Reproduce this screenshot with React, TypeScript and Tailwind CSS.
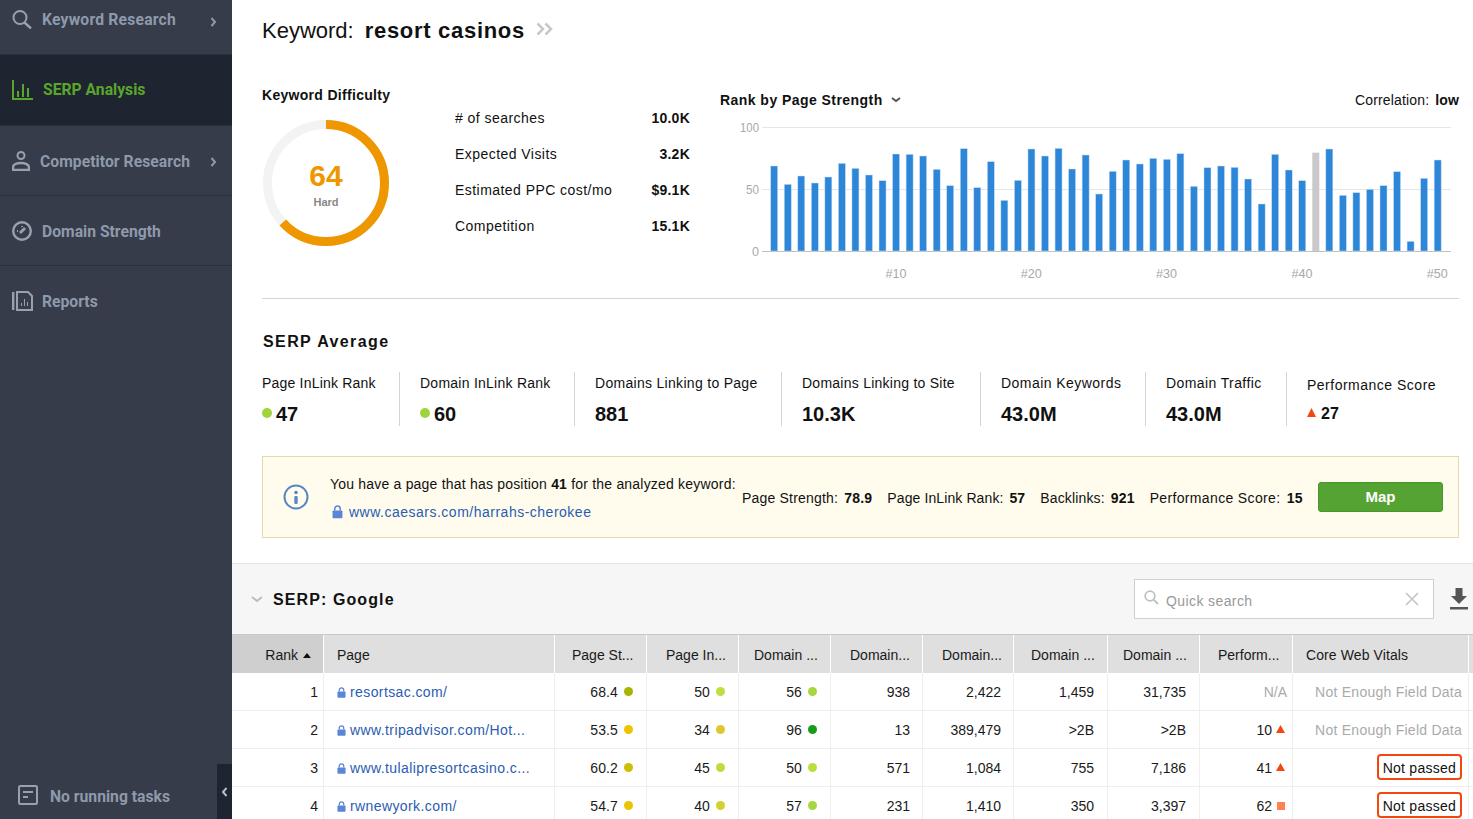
import type { ReactNode } from 'react';

const barTops = [258,313,288,309,291,250,265,285,302,222,223,228,268,317,206,323,245,361,301,207,228,205,267,225,342,274,240,252,235,238,221,319,263,258,262,297,372,223,270,302,218,207,346,338,328,317,275,484,295,240];

const gridCols = 'grid-cols-[92px_231px_92px_92px_92px_92px_91px_94px_92px_93px_176px_4px]';

type Dot = { value: string; color: string };
interface Row {
  rank: number;
  page: string;
  strength: Dot;
  inlink: Dot;
  domain: Dot;
  d1: string;
  d2: string;
  d3: string;
  d4: string;
  perf: ReactNode;
  vitals: boolean;
}

const rows: Row[] = [
  { rank: 1, page: 'resortsac.com/', strength: { value: '68.4', color: 'bg-[#a8b400]' }, inlink: { value: '50', color: 'bg-[#bde040]' }, domain: { value: '56', color: 'bg-[#a5d83f]' }, d1: '938', d2: '2,422', d3: '1,459', d4: '31,735', perf: <span className="text-[#aaaaaa] mr-[-2px]">N/A</span>, vitals: false },
  { rank: 2, page: 'www.tripadvisor.com/Hot...', strength: { value: '53.5', color: 'bg-[#eec400]' }, inlink: { value: '34', color: 'bg-[#dfc82c]' }, domain: { value: '96', color: 'bg-[#1a9a1a]' }, d1: '13', d2: '389,479', d3: '>2B', d4: '>2B', perf: <>10<Triangle /></>, vitals: false },
  { rank: 3, page: 'www.tulalipresortcasino.c...', strength: { value: '60.2', color: 'bg-[#cdbf00]' }, inlink: { value: '45', color: 'bg-[#c0dc3c]' }, domain: { value: '50', color: 'bg-[#bcdd40]' }, d1: '571', d2: '1,084', d3: '755', d4: '7,186', perf: <>41<Triangle /></>, vitals: true },
  { rank: 4, page: 'rwnewyork.com/', strength: { value: '54.7', color: 'bg-[#eac400]' }, inlink: { value: '40', color: 'bg-[#d4d030]' }, domain: { value: '57', color: 'bg-[#a5d83f]' }, d1: '231', d2: '1,410', d3: '350', d4: '3,397', perf: <>62<span className="ml-[5px] w-[8px] h-[8px] bg-[#ff8050] inline-block mb-[1px]" /></>, vitals: true },
];

function Triangle() {
  return (
    <svg width="9" height="8" viewBox="0 0 9 8" className="ml-[4px] mb-[3px] inline-block">
      <path d="M4.5 0 9 8H0z" fill="#f4460f" />
    </svg>
  );
}

function Lock({ size = 10 }: { size?: number }) {
  return (
    <svg width={size} height={size * 1.2} viewBox="0 0 10 12" className="shrink-0">
      <path d="M2.5 5V3.4a2.5 2.5 0 0 1 5 0V5" fill="none" stroke="#5b86d6" strokeWidth="1.4" />
      <rect x="0.5" y="5" width="9" height="7" rx="0.8" fill="#5b86d6" />
    </svg>
  );
}

function NavItem({ icon, label, arrow, active, h, labelClass = '' }: { icon: ReactNode; label: string; arrow?: boolean; active?: boolean; h: string; labelClass?: string }) {
  return (
    <div className={`${h} flex items-center pl-[12px] pr-[15px] border-b border-[#2b303b] ${active ? 'bg-[#1e2430] text-[#5aa62c]' : 'text-[#8e99ab]'}`}>
      <span className="w-[30px] shrink-0 flex">{icon}</span>
      <span className={`flex-1 text-[15.7px] font-bold whitespace-nowrap ${labelClass}`}>{label}</span>
      {arrow && (
        <svg width="7" height="10" viewBox="0 0 7 10" className="mt-[3px]">
          <path d="M1.5 1 5 5 1.5 9" fill="none" stroke="#8e99ab" strokeWidth="2" />
        </svg>
      )}
    </div>
  );
}

function Sidebar() {
  return (
    <aside className="relative w-[232px] shrink-0 bg-[#363c49] h-[819px] font-['Roboto',sans-serif]">
      <div className="h-[55px] flex items-start pt-[10px] pl-[12px] pr-[15px] border-b border-[#2b303b] text-[#8e99ab]">
        <svg width="20" height="19" viewBox="0 0 20 19" className="mr-[10px]">
          <circle cx="8" cy="7.5" r="6.500" fill="none" stroke="#9aa1ad" strokeWidth="2" />
          <path d="m12.500 12.500 6.500 6" stroke="#9aa1ad" strokeWidth="2.400" />
        </svg>
        <span className="flex-1 text-[15.7px] leading-[20px] font-bold tracking-[0.2px]">Keyword Research</span>
        <svg width="7" height="10" viewBox="0 0 7 10" className="mt-[7px]">
          <path d="M1.5 1 5 5 1.5 9" fill="none" stroke="#8e99ab" strokeWidth="2" />
        </svg>
      </div>
      <NavItem
        h="h-[71px]"
        active
        label="SERP Analysis"
        labelClass="ml-[1px]"
        icon={
          <svg width="21" height="20" viewBox="0 0 21 20" fill="none" stroke="#5aa62c" strokeWidth="2">
            <path d="M1 0v19h20M6 11v6M11 4v13M16 8v9" />
          </svg>
        }
        arrow={false}
      />
      <NavItem
        h="h-[70px]"
        arrow
        label="Competitor Research"
        labelClass="ml-[-2px] pt-[2px] tracking-[0.05px]"
        icon={
          <svg width="18" height="20" viewBox="0 0 18 20" fill="none" stroke="#9aa1ad" strokeWidth="2">
            <circle cx="9" cy="4.5" r="3.5" />
            <path d="M1 19v-2.500C1 13.500 5 12 9 12s8 1.500 8 4.500V19z" strokeWidth="2.400" />
          </svg>
        }
      />
      <NavItem
        h="h-[70px]"
        label="Domain Strength"
        labelClass="pt-[2px]"
        icon={
          <svg width="20" height="20" viewBox="0 0 20 20" fill="none" stroke="#9aa1ad" strokeWidth="2.400">
            <circle cx="10" cy="10" r="8.800" />
            <path d="m8 12 5-5" strokeWidth="2.800" />
            <path d="M5 10h1M10 5v1" strokeWidth="1.800" />
          </svg>
        }
      />
      <div className="h-[70px] flex items-center pl-[12px] text-[#8e99ab]">
        <span className="w-[30px] shrink-0 flex">
          <svg width="21" height="20" viewBox="0 0 21 20" fill="none" stroke="#9aa1ad" strokeWidth="1.800">
            <path d="M1.200 1v18" strokeWidth="2.400" />
            <path d="M5 1h11l4 4v14H5z" strokeWidth="2" />
            <path d="M9.500 15v-3M12.500 15V8M15.500 15v-4" strokeWidth="1" />
          </svg>
        </span>
        <span className="text-[15.7px] font-bold pt-[2px]">Reports</span>
      </div>
      <div className="absolute left-[18px] bottom-[10px] flex items-center text-[#8e99ab]">
        <svg width="20" height="20" viewBox="0 0 20 20" fill="none" stroke="#9aa1ad" strokeWidth="2" className="mr-[12px] mb-[2px]">
          <rect x="1" y="1" width="18" height="18" rx="1.500" />
          <path d="M5 7h10M5 12h5" />
        </svg>
        <span className="text-[15.7px] font-bold pt-[2px]">No running tasks</span>
      </div>
      <div className="absolute right-0 bottom-0 w-[15px] h-[55px] bg-[#1e2430] flex items-center justify-center">
        <svg width="7" height="10" viewBox="0 0 7 10">
          <path d="M5.500 1 2 5l3.500 4" fill="none" stroke="#b8bec8" strokeWidth="2" />
        </svg>
      </div>
    </aside>
  );
}

function Gauge() {
  return (
    <div className="relative w-[126px] h-[126px] ml-[1px]">
      <svg width="126" height="126" viewBox="0 0 126 126" className="-rotate-90">
        <circle cx="63" cy="63" r="58.500" fill="none" stroke="#f3f3f3" strokeWidth="9" />
        <circle cx="63" cy="63" r="58.500" fill="none" stroke="#ee9700" strokeWidth="9" strokeDasharray="232 368" />
      </svg>
      <div className="absolute inset-0 pt-[2px] flex flex-col items-center justify-center">
        <span className="text-[30px] leading-[34px] font-bold text-[#ee9700]">64</span>
        <span className="text-[11px] leading-[14px] font-bold text-[#888888] mt-[2px]">Hard</span>
      </div>
    </div>
  );
}

function Chart() {
  return (
    <svg width="739" height="170" viewBox="0 0 739 170" className="block mt-[9px]">
      <path d="M42 8.500h689M42 70.500h689" stroke="#e6e6e6" />
      <path d="M42 132.500h689" stroke="#c0c0c0" />
      {[['100', 19], ['50', 13], ['0', 7]].map(([t, len], i) => (
        <text key={t} x="39" y={13 + i * 62} textAnchor="end" fontSize="13" textLength={len} lengthAdjust="spacingAndGlyphs" fill="#a8a8a8">{t}</text>
      ))}
      {barTops.map((top, i) => {
        const h = (513 - top) / 3;
        const gray = i === 40;
        return <rect key={i} x={50.7 + i * 13.54} y={132 - h} width="7" height={h} fill={gray ? '#c9c9c9' : '#2e86d9'} stroke={gray ? 'none' : '#c5dff6'} strokeWidth="0.5" />;
      })}
      {[10, 20, 30, 40, 50].map((n, i) => (
        <text key={n} x={176 + i * 135.300} y="159" textAnchor="middle" fontSize="13" textLength={21} lengthAdjust="spacingAndGlyphs" fill="#a8a8a8">#{n}</text>
      ))}
    </svg>
  );
}

function Metric({ label, value, w, dot, track }: { label: string; value: string; w: string; dot?: boolean; track: string }) {
  return (
    <div className={`${w} h-[54px] shrink-0 flex flex-col border-r border-[#d4d4d4]`}>
      <div className={`text-[14px] leading-[22px] whitespace-nowrap ${track}`}>{label}</div>
      <div className="flex items-center text-[20px] leading-[24px] font-bold mt-[8px]">
        {dot && <span className="w-[10px] h-[10px] rounded-full bg-[#9ed53c] mr-[4px] mt-[-2px]" />}
        {value}
      </div>
    </div>
  );
}

function Cell({ children, className = '' }: { children?: ReactNode; className?: string }) {
  return <div className={`h-[38px] pt-[2px] border-r border-b border-[#efefef] flex items-center justify-end whitespace-nowrap ${className}`}>{children}</div>;
}

function DotCell({ d }: { d: Dot }) {
  return (
    <Cell className="pr-[13px] tracking-[0.1px]">
      {d.value}
      <span className={`ml-[6px] w-[9px] h-[9px] mb-[2px] rounded-full ${d.color}`} />
    </Cell>
  );
}

function Th({ children, className = '' }: { children?: ReactNode; className?: string }) {
  return <div className={`h-[38px] pt-[2px] flex items-center border-r border-white whitespace-nowrap ${className}`}>{children}</div>;
}

function SerpTable() {
  return (
    <div className={`grid ${gridCols} text-[14px] text-[#1a1a1a]`}>
      <Th className="bg-[#cfcfcf] justify-end pr-[12px]">
        Rank
        <svg width="8" height="5" viewBox="0 0 8 5" className="ml-[5px]"><path d="M4 0l4 5H0z" fill="#111" /></svg>
      </Th>
      <Th className="bg-[#dfdfdf] pl-[13px]">Page</Th>
      <Th className="bg-[#dfdfdf] pl-[17px]">Page St...</Th>
      <Th className="bg-[#dfdfdf] pl-[19px]">Page In...</Th>
      <Th className="bg-[#dfdfdf] pl-[15px]">Domain ...</Th>
      <Th className="bg-[#dfdfdf] pl-[19px]">Domain...</Th>
      <Th className="bg-[#dfdfdf] pl-[19px]">Domain...</Th>
      <Th className="bg-[#dfdfdf] pl-[17px]">Domain ...</Th>
      <Th className="bg-[#dfdfdf] pl-[15px]">Domain ...</Th>
      <Th className="bg-[#dfdfdf] pl-[18px]">Perform...</Th>
      <Th className="bg-[#dfdfdf] pl-[13px] tracking-[0.1px]">Core Web Vitals</Th>
      <div className="h-[38px] bg-[#dfdfdf]" />
      {rows.map(r => (
        <div key={r.rank} className="contents">
          <Cell className="pr-[5px]">{r.rank}</Cell>
          <Cell className="justify-start pl-[13px] gap-[4px] text-[#2a5db0] tracking-[0.4px]">
            <Lock size={9} />
            {r.page}
          </Cell>
          <DotCell d={r.strength} />
          <DotCell d={r.inlink} />
          <DotCell d={r.domain} />
          <Cell className="pr-[12px]">{r.d1}</Cell>
          <Cell className="pr-[12px]">{r.d2}</Cell>
          <Cell className="pr-[13px]">{r.d3}</Cell>
          <Cell className="pr-[13px]">{r.d4}</Cell>
          <Cell className="pr-[7px]">{r.perf}</Cell>
          <Cell className="pr-[6px] tracking-[0.25px]">
            {r.vitals ? (
              <span className="h-[26px] px-[4px] pt-[2px] mb-[3px] border-2 border-[#f4460f] rounded-[4px] flex items-center text-[#111]">Not passed</span>
            ) : (
              <span className="text-[#aaaaaa]">Not Enough Field Data</span>
            )}
          </Cell>
          <div className="h-[38px] border-b border-[#efefef]" />
        </div>
      ))}
    </div>
  );
}

export default function App() {
  return (
    <div className="flex h-[819px] overflow-hidden bg-white text-[#111] font-['Liberation_Sans',Arial,sans-serif]">
      <Sidebar />
      <main className="flex-1 min-w-0">
        <div className="pl-[30px] pr-[14px]">
          <div className="h-[61px] flex items-center text-[22px] whitespace-nowrap">
            <span>Keyword:</span>
            <span className="font-bold ml-[11px] tracking-[0.7px]">resort casinos</span>
            <svg width="18" height="14" viewBox="0 0 18 14" fill="none" stroke="#c8c8c8" strokeWidth="2.500" className="ml-[11px] mb-[3px]">
              <path d="M1.500 1.500 7 7l-5.500 5.500M9.500 1.500 15 7l-5.500 5.500" />
            </svg>
          </div>
          <div className="h-[238px] flex border-b border-[#d4d4d4]">
            <div className="w-[193px] pt-[24px]">
              <div className="text-[14px] leading-[20px] font-bold mb-[15px] tracking-[0.3px] whitespace-nowrap">Keyword Difficulty</div>
              <Gauge />
            </div>
            <div className="w-[235px] pt-[39px] text-[14px] tracking-[0.45px] shrink-0">
              {[
                ['# of searches', '10.0K'],
                ['Expected Visits', '3.2K'],
                ['Estimated PPC cost/mo', '$9.1K'],
                ['Competition', '15.1K'],
              ].map(([a, b]) => (
                <div key={a} className="h-[36px] flex justify-between items-center">
                  <span>{a}</span>
                  <span className="font-bold tracking-[0.25px]">{b}</span>
                </div>
              ))}
            </div>
            <div className="flex-1 ml-[30px] pt-[29px] min-w-0">
              <div className="flex items-center justify-between h-[20px] text-[14px]">
                <div className="flex items-center font-bold tracking-[0.45px]">
                  Rank by Page Strength
                  <svg width="10" height="6" viewBox="0 0 10 6" className="ml-[8px]"><path d="M1 1l4 3 4-3" fill="none" stroke="#555" strokeWidth="2" /></svg>
                </div>
                <div className="tracking-[0.15px]">Correlation: <b className="ml-[2px]">low</b></div>
              </div>
              <Chart />
            </div>
          </div>
          <div className="h-[157px]">
            <div className="pt-[33px] text-[16px] leading-[20px] font-bold tracking-[1.4px] pl-[1px]">SERP Average</div>
            <div className="flex mt-[20px]">
              <Metric w="w-[138px]" label="Page InLink Rank" value="47" dot track="tracking-[0.2px]" />
              <div className="w-[20px]" />
              <Metric w="w-[155px]" label="Domain InLink Rank" value="60" dot track="tracking-[0.25px]" />
              <div className="w-[20px]" />
              <Metric w="w-[187px]" label="Domains Linking to Page" value="881" track="tracking-[0.3px]" />
              <div className="w-[20px]" />
              <Metric w="w-[179px]" label="Domains Linking to Site" value="10.3K" track="tracking-[0.25px]" />
              <div className="w-[20px]" />
              <Metric w="w-[145px]" label="Domain Keywords" value="43.0M" track="tracking-[0.45px]" />
              <div className="w-[20px]" />
              <Metric w="w-[121px]" label="Domain Traffic" value="43.0M" track="tracking-[0.4px]" />
              <div className="w-[20px]" />
              <div className="pt-[2px]">
                <div className="text-[14px] leading-[22px] tracking-[0.5px] whitespace-nowrap">Performance Score</div>
                <div className="flex items-center text-[16px] leading-[20px] font-bold mt-[8px]">
                  <svg width="9" height="9" viewBox="0 0 9 9" className="mr-[5px] mb-[3px]"><path d="M4.500 0 9 9H0z" fill="#f4460f" /></svg>
                  27
                </div>
              </div>
            </div>
          </div>
          <div className="h-[82px] flex items-center bg-[#fffcee] border border-[#e5d9ab] text-[14px] whitespace-nowrap">
            <svg width="26" height="26" viewBox="0 0 26 26" fill="none" className="ml-[20px] mr-[21px] shrink-0">
              <circle cx="13" cy="13" r="11.500" stroke="#5b86c6" strokeWidth="2" />
              <circle cx="13" cy="8.500" r="1.800" fill="#5b86c6" />
              <rect x="11.300" y="12" width="3.400" height="8" rx="1.200" fill="#5b86c6" />
            </svg>
            <div className="w-[412px] shrink-0">
              <div className="leading-[20px] tracking-[0.2px] mt-[2px]">You have a page that has position <b>41</b> for the analyzed keyword:</div>
              <div className="flex items-center gap-[6px] pl-[2px] mt-[8px] leading-[20px] text-[#2a5db0] tracking-[0.5px]">
                <Lock size={11} />
                www.caesars.com/harrahs-cherokee
              </div>
            </div>
            <span className="tracking-[0.2px] pt-[2px]">Page Strength: <b className="ml-[2px]">78.9</b></span>
            <span className="ml-[15px] tracking-[0.1px] pt-[2px]">Page InLink Rank: <b className="ml-[2px]">57</b></span>
            <span className="ml-[15px] tracking-[0.15px] pt-[2px]">Backlinks: <b className="ml-[2px]">921</b></span>
            <span className="ml-[15px] tracking-[0.35px] pt-[2px]">Performance Score: <b className="ml-[2px]">15</b></span>
            <button className="ml-[15px] w-[125px] h-[30px] bg-[#55a332] border border-[#4a9528] rounded-[3px] text-[15px] text-white font-bold">Map</button>
          </div>
        </div>
        <section className="mt-[25px] bg-[#f6f6f6] border-t border-[#e4e4e4]">
          <div className="h-[71px] flex items-center pl-[19px] pr-[5px] border-b border-[#c8c8c8]">
            <svg width="12" height="7" viewBox="0 0 12 7" className="mr-[10px]"><path d="M1 1l5 4 5-4" fill="none" stroke="#bdbdbd" strokeWidth="2" /></svg>
            <span className="text-[16px] font-bold tracking-[1.1px] flex-1 pt-[2px]">SERP: Google</span>
            <div className="w-[300px] h-[40px] bg-white border border-[#cfcfcf] flex items-center pl-[9px] pr-[14px] text-[14px] text-[#999999]">
              <svg width="15" height="15" viewBox="0 0 15 15" fill="none" stroke="#c0c0c0" strokeWidth="1.800" className="mr-[7px] mb-[3px]">
                <circle cx="6" cy="6" r="4.800" />
                <path d="m9.500 9.500 4.500 4.500" />
              </svg>
              <span className="flex-1 tracking-[0.4px] pt-[5px]">Quick search</span>
              <svg width="14" height="14" viewBox="0 0 14 14" stroke="#c4c4c4" strokeWidth="1.600"><path d="M1 1l12 12M13 1 1 13" /></svg>
            </div>
            <svg width="18" height="22" viewBox="0 0 18 22" fill="#555555" className="ml-[16px]">
              <path d="M5.500 0h7v8H17l-8 8-8-8h4.500z" />
              <rect x="0" y="19" width="18" height="2.500" />
            </svg>
          </div>
        </section>
        <SerpTable />
      </main>
    </div>
  );
}
